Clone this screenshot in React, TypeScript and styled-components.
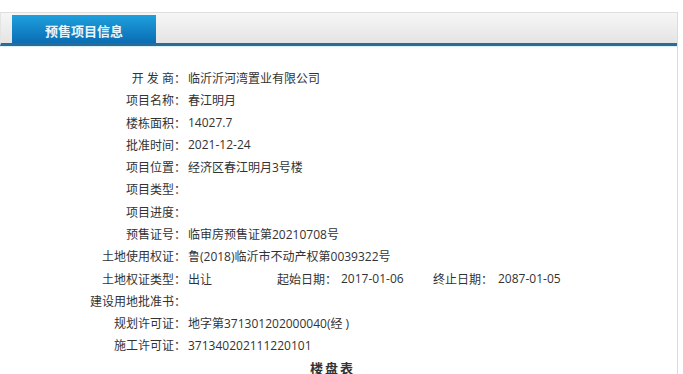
import { createGlobalStyle } from "styled-components";
import styled from "styled-components";

const GlobalStyle = createGlobalStyle`
  html, body {
    margin: 0;
    padding: 0;
    background: #fff;
  }
  body {
    font-family: "Open Sans", "Noto Sans CJK SC", sans-serif;
    font-size: 12px;
    color: #333;
  }
`;

const Panel = styled.div`
  width: 678px;
  margin-top: 12px;
  border-right: 1px solid #dcdcdc;
  min-height: 362px;
  box-sizing: border-box;
`;

const TabBar = styled.div`
  display: flex;
  align-items: flex-end;
  height: 34px;
  padding-left: 11px;
  border-top: 1px solid #dedede;
  border-left: 1px solid #e4e4e4;
  background: linear-gradient(#f6f6f6, #e4e4e4);
  border-bottom: 3px solid #2e6a93;
  box-shadow: 0 1px 0 #d6f3fc;
  box-sizing: border-box;
`;

const Tab = styled.div`
  width: 144px;
  height: 28px;
  display: flex;
  align-items: center;
  justify-content: center;
  padding-top: 2px;
  box-sizing: border-box;
  background: linear-gradient(#1fa0de, #0a6db4);
  color: #e6f6ff;
  font-family: "Noto Sans CJK SC", sans-serif;
  font-size: 13px;
  font-weight: bold;
`;

const InfoList = styled.div`
  padding-top: 21px;
  display: grid;
  grid-auto-rows: 22.27px;
`;

const Row = styled.div`
  display: flex;
  align-items: center;
  white-space: nowrap;
`;

const Label = styled.span<{ $w?: number; $left?: boolean }>`
  width: ${(p) => p.$w ?? 186}px;
  text-align: ${(p) => (p.$left ? "left" : "right")};
  flex-shrink: 0;
`;

const Value = styled.span<{ $w?: number }>`
  padding-left: 2px;
  ${(p) => (p.$w ? `width: ${p.$w}px; flex-shrink: 0;` : "")}
`;

const Footer = styled.div`
  display: flex;
  justify-content: center;
  padding-right: 12px;
  padding-top: 2px;
  font-family: "Noto Sans CJK SC", sans-serif;
  font-size: 13px;
  font-weight: bold;
  letter-spacing: 2px;
  color: #333;
`;

const rows: [string, string][] = [
  ["开\u00a0发\u00a0商：", "临沂沂河湾置业有限公司"],
  ["项目名称：", "春江明月"],
  ["楼栋面积：", "14027.7"],
  ["批准时间：", "2021-12-24"],
  ["项目位置：", "经济区春江明月3号楼"],
  ["项目类型：", ""],
  ["项目进度：", ""],
  ["预售证号：", "临审房预售证第20210708号"],
  ["土地使用权证：", "鲁(2018)临沂市不动产权第0039322号"],
];

const rowsAfter: [string, string][] = [
  ["建设用地批准书：", ""],
  ["规划许可证：", "地字第371301202000040(经 )"],
  ["施工许可证：", "371340202111220101"],
];

export default function App() {
  return (
    <>
      <GlobalStyle />
      <Panel>
        <TabBar>
          <Tab>预售项目信息</Tab>
        </TabBar>
        <InfoList>
          {rows.map(([k, v]) => (
            <Row key={k}>
              <Label>{k}</Label>
              <Value>{v}</Value>
            </Row>
          ))}
          <Row>
            <Label>土地权证类型：</Label>
            <Value $w={89}>出让</Value>
            <Label $w={62} $left>起始日期：</Label>
            <Value $w={92}>2017-01-06</Value>
            <Label $w={63} $left>终止日期：</Label>
            <Value>2087-01-05</Value>
          </Row>
          {rowsAfter.map(([k, v]) => (
            <Row key={k}>
              <Label>{k}</Label>
              <Value>{v}</Value>
            </Row>
          ))}
          <Footer>楼盘表</Footer>
        </InfoList>
      </Panel>
    </>
  );
}
